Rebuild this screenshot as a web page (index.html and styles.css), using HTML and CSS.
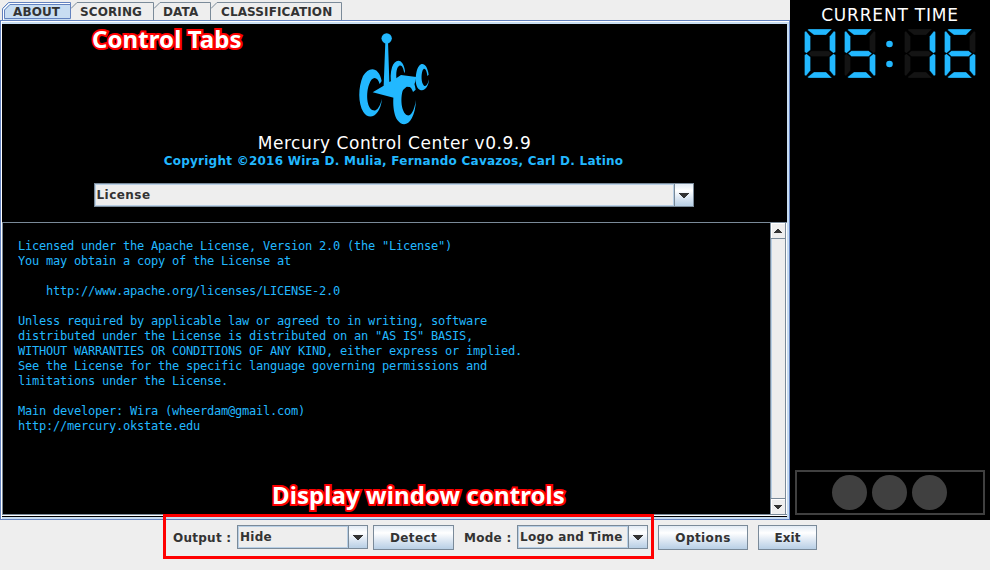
FILE: index.html
```html
<!DOCTYPE html>
<html lang="en">
<head>
<meta charset="utf-8">
<title>Mercury Control Center</title>
<link rel="stylesheet" href="styles.css">
</head>
<body>
<svg width="0" height="0" class="defs">
  <defs>
    <path id="sA" d="M4 0H27.500L21.500 6H9.500L3 1Z"/>
    <path id="sB" d="M31 3V23L29 24.200L25 21V7.500L29.500 2Z"/>
    <path id="sC" d="M31 46V26L29 24.800L25 28V41.500L29.500 47Z"/>
    <path id="sD" d="M4 49H27.500L21.500 43H9.500L3 48Z"/>
    <path id="sE" d="M0 46V26L2 24.800L6 28V41.500L1.500 47Z"/>
    <path id="sF" d="M0 3V23L2 24.200L6 21V7.500L1.500 2Z"/>
    <path id="sG" d="M3.500 24.500L7 21.700H24L27.500 24.500L24 27.500H7Z"/>
  </defs>
</svg>
<div class="window">
  <div class="upper">
    <section class="tabbed">
      <nav class="tabs">
        <div class="tab selected"><svg class="edge" width="69" height="18" viewBox="0 0 69 18"><path class="fill" d="M0.500 18V7L7 0.500H68.500V18Z"/><path class="glow" d="M1.500 18V7.500L7.500 1.500H68"/><path class="line" d="M0.500 18V6.500L6.500 0.500H68.500V16.500H2.500V8L8 2.500H68"/></svg><span class="t-about">ABOUT</span></div>
        <div class="tab scoring"><svg class="edge" width="83" height="18" viewBox="0 0 83 18"><path class="edge-line" d="M0 6.500L6 0.500H82.500V18"/></svg><span class="t-scoring">SCORING</span></div>
        <div class="tab data"><svg class="edge" width="57" height="18" viewBox="0 0 57 18"><path class="edge-line" d="M0 6.500L6 0.500H56.500V18"/></svg><span class="t-data">DATA</span></div>
        <div class="tab classification"><svg class="edge" width="131" height="18" viewBox="0 0 131 18"><path class="edge-line" d="M0 6.500L6 0.500H130.500V18"/></svg><span class="t-class">CLASSIFICATION</span></div>
      </nav>
      <div class="pane">
        <div class="about">
          <svg class="logo" width="110" height="110" viewBox="0 0 330 330">
            <circle cx="140" cy="55" r="15.500"/>
            <path d="M136 65H144L148 186L164 178L183 165L229 171L226 185L219 202L200 200L186 212L161 233L98 217L131 197Z"/>
            <path d="M125 183C117 139 86 138 69 168C54 202 54 250 70 276C88 304 121 288 126 236C119 262 110 274 99 271C79 264 78 217 87 194C96 166 113 169 119 192Z"/>
            <path d="M227 209C222 163 188 158 171 187C155 222 157 278 172 300C194 330 225 306 228 240C222 273 214 288 202 286C183 277 181 234 188 212C197 188 214 198 219 216Z"/>
            <path d="M195 153C190 114 165 114 156 142C151 158 151 178 154 192L170 182C167 157 170 141 178 137C186 134 190 144 193 160Z"/>
            <path d="M266 164C260 122 237 124 230 154C224 179 227 204 239 209C254 216 266 199 267 178C263 194 258 201 252 197C243 189 243 164 248 151C253 139 261 151 262 168Z"/>
          </svg>
          <h1>Mercury Control Center v0.9.9</h1>
          <p class="copyright">Copyright ©2016 Wira D. Mulia, Fernando Cavazos, Carl D. Latino</p>
          <div class="combo license"><span class="value t-license">License</span><span class="arrow"><svg width="11" height="5" shape-rendering="crispEdges"><path d="M0 0H11L6 5H5Z"/></svg></span></div>
          <div class="note note-top">Control Tabs</div>
        </div>
        <div class="scroller">
<pre class="text">Licensed under the Apache License, Version 2.0 (the "License")
You may obtain a copy of the License at

    http://www.apache.org/licenses/LICENSE-2.0

Unless required by applicable law or agreed to in writing, software
distributed under the License is distributed on an "AS IS" BASIS,
WITHOUT WARRANTIES OR CONDITIONS OF ANY KIND, either express or implied.
See the License for the specific language governing permissions and
limitations under the License.

Main developer: Wira (wheerdam@gmail.com)
http://mercury.okstate.edu</pre>
          <div class="scrollbar">
            <span class="step up"><svg width="8" height="4" shape-rendering="crispEdges"><path d="M0 4H8L5 0H3Z"/></svg></span>
            <span class="track"></span>
            <span class="step down"><svg width="8" height="4" shape-rendering="crispEdges"><path d="M0 0H8L5 4H3Z"/></svg></span>
          </div>
          <div class="note note-bottom">Display window controls</div>
        </div>
      </div>
    </section>
    <aside class="side">
      <div class="clock-title">CURRENT TIME</div>
      <svg class="clock" width="200" height="50" viewBox="0 0 200 50">
        <g transform="translate(14.500 0)"><g class="on"><use href="#sA"/><use href="#sB"/><use href="#sC"/><use href="#sD"/><use href="#sE"/><use href="#sF"/></g><use class="off" href="#sG"/></g>
        <g transform="translate(54.500 0)"><g class="off"><use href="#sB"/><use href="#sE"/></g><g class="on"><use href="#sA"/><use href="#sF"/><use href="#sG"/><use href="#sC"/><use href="#sD"/></g></g>
        <g class="on"><circle cx="99.500" cy="15" r="3.300"/><circle cx="99.500" cy="35" r="3.300"/></g>
        <g transform="translate(114.500 0)"><g class="off"><use href="#sA"/><use href="#sF"/><use href="#sG"/><use href="#sE"/><use href="#sD"/></g><g class="on"><use href="#sB"/><use href="#sC"/></g></g>
        <g transform="translate(154.500 0)"><use class="off" href="#sB"/><g class="on"><use href="#sA"/><use href="#sF"/><use href="#sG"/><use href="#sC"/><use href="#sD"/><use href="#sE"/></g></g>
      </svg>
      <div class="lamps"><i></i><i></i><i></i></div>
    </aside>
  </div>
  <footer class="controls">
    <div class="outline"></div>
    <label class="t-output">Output :</label>
    <div class="combo output"><span class="value t-hide">Hide</span><span class="arrow"><svg width="11" height="5" shape-rendering="crispEdges"><path d="M0 0H11L6 5H5Z"/></svg></span></div>
    <button class="detect"><span class="t-detect">Detect</span></button>
    <label class="mode-label t-mode">Mode :</label>
    <div class="combo mode"><span class="value t-logo">Logo and Time</span><span class="arrow"><svg width="11" height="5" shape-rendering="crispEdges"><path d="M0 0H11L6 5H5Z"/></svg></span></div>
    <button class="options"><span class="t-options">Options</span></button>
    <button class="exit"><span class="t-exit">Exit</span></button>
  </footer>
</div>
</body>
</html>
```
FILE: styles.css
```css
* { box-sizing: border-box; }
body { margin: 0; background: #eee; color: #333; font: bold 12px/14px "DejaVu Sans", sans-serif; }
svg { display: block; }
.defs { position: absolute; }
.window { width: 990px; height: 570px; overflow: hidden; }
.upper { display: flex; height: 520px; }
.tabbed { width: 790px; display: flex; flex-direction: column; }
.tabs { display: flex; height: 20px; padding: 2px 0 0 2px; }
.tab { position: relative; height: 18px; padding-top: 3px; white-space: nowrap; letter-spacing: .12px; }
.tab span { position: relative; display: block; }
.selected { width: 69px; padding-left: 11px; }
.scoring { width: 83px; padding-left: 9px; }
.data { width: 57px; padding-left: 9px; }
.classification { width: 131px; padding-left: 10px; }
.edge { position: absolute; left: 0; top: 0; }
.fill { fill: #c8ddf2; }
.line { fill: none; stroke: #6382bf; }
.glow { fill: none; stroke: #fff; }
.edge-line { fill: none; stroke: #7a8a99; }
.pane { height: 500px; border: 1px solid #6382bf; background: #c8ddf2; padding: 3px 2px 2px 1px; box-shadow: inset 0 1px #fff, inset 1px 0 #fff; }
.about { position: relative; height: 198px; padding-right: 2px; background: #000; display: flex; flex-direction: column; align-items: center; color: #fff; }
.logo { fill: #22b8ff; margin: -4px 0 0 3px; }
h1 { margin: 4px 0 0 2px; font-size: 17px; line-height: 18px; font-weight: normal; letter-spacing: .57px; white-space: nowrap; }
.copyright { margin: 2px 0 0; color: #22b8ff; letter-spacing: .25px; white-space: nowrap; }
.combo { display: flex; height: 24px; border: 1px solid #7a8a99; color: #333; background: #eee; }
.value { flex: 1; padding: 3px 0 0 1px; border: 1px solid #b8cfe5; white-space: nowrap; }
.arrow { width: 19px; padding-right: 1px; border-left: 1px solid #7a8a99; display: flex; align-items: center; justify-content: center; background: linear-gradient(#e2ebf5, #fff 30%, #dfe9f4 60%, #b8cfe5); fill: #333; }
.license { width: 600px; margin-top: 15px; }
.scroller { position: relative; height: 293px; border: solid #7a8a99; border-width: 1px 0 1px 1px; box-shadow: 0 1px #fff; background: #000; display: flex; }
.pane::after { content: ""; display: block; height: 1px; margin-top: 1px; background: #000; }
.text { margin: 0; flex: 1; padding: 16px 0 0 15px; color: #22b8ff; font: 12px/15px "DejaVu Sans Mono", monospace; letter-spacing: -.224px; }
.scrollbar { width: 17px; display: flex; flex-direction: column; border-left: 1px solid #7a8a99; border-right: 1px solid #fff; background: #eee; }
.scrollbar > span { border-right: 1px solid #7a8a99; }
.step { height: 16px; display: flex; align-items: center; justify-content: center; fill: #333; box-shadow: inset 1px 1px #fff; }
.up { border-bottom: 1px solid #7a8a99; }
.down { border-top: 1px solid #7a8a99; }
.track { flex: 1; border-left: 1px solid #b8cfe5; }
.note { position: absolute; color: #fff; font: bold 24px/32px "Noto Sans", sans-serif; letter-spacing: .08px; white-space: nowrap; -webkit-text-stroke: 4px #f00; paint-order: stroke fill; stroke-linejoin: round; }
.note-top { left: 90px; top: -1px; }
.note-bottom { left: 269px; top: 256px; }
.side { width: 200px; background: #000; color: #fff; display: flex; flex-direction: column; }
.clock-title { height: 29px; padding-top: 5px; text-align: center; font-size: 17px; line-height: 20px; font-weight: normal; letter-spacing: .8px; white-space: nowrap; }
.on { fill: #22b8ff; }
.off { fill: #141414; }
.clock use { stroke: #000; stroke-width: .3px; }
.lamps { margin: auto 5px 5px; height: 45px; padding-right: 2px; border: 2px solid #404040; display: flex; align-items: center; justify-content: center; gap: 5px; }
.lamps i { width: 35px; height: 35px; border-radius: 50%; background: #404040; }
.controls { position: relative; display: flex; align-items: flex-start; height: 50px; padding: 5px 0 0 173px; letter-spacing: .26px; }
.controls > label { width: 64px; padding-top: 6px; white-space: nowrap; }
.outline { position: absolute; left: 163px; top: -6px; width: 491px; height: 45px; border: 3px solid #f00; }
.output { width: 131px; }
.controls > .mode-label { width: 53px; margin-left: 10px; }
.mode { width: 131px; }
.t-license { letter-spacing: .45px; }
button { height: 25px; padding: 0; border: 1px solid #7a8a99; background: linear-gradient(#e2ebf5, #fff 30%, #dfe9f4 60%, #b8cfe5); color: #333; font: inherit; letter-spacing: .4px; }
.detect { width: 81px; margin-left: 5px; }
.options { width: 90px; margin-left: 10px; letter-spacing: .4px; }
.exit { width: 59px; margin-left: 10px; letter-spacing: 0; }
```
